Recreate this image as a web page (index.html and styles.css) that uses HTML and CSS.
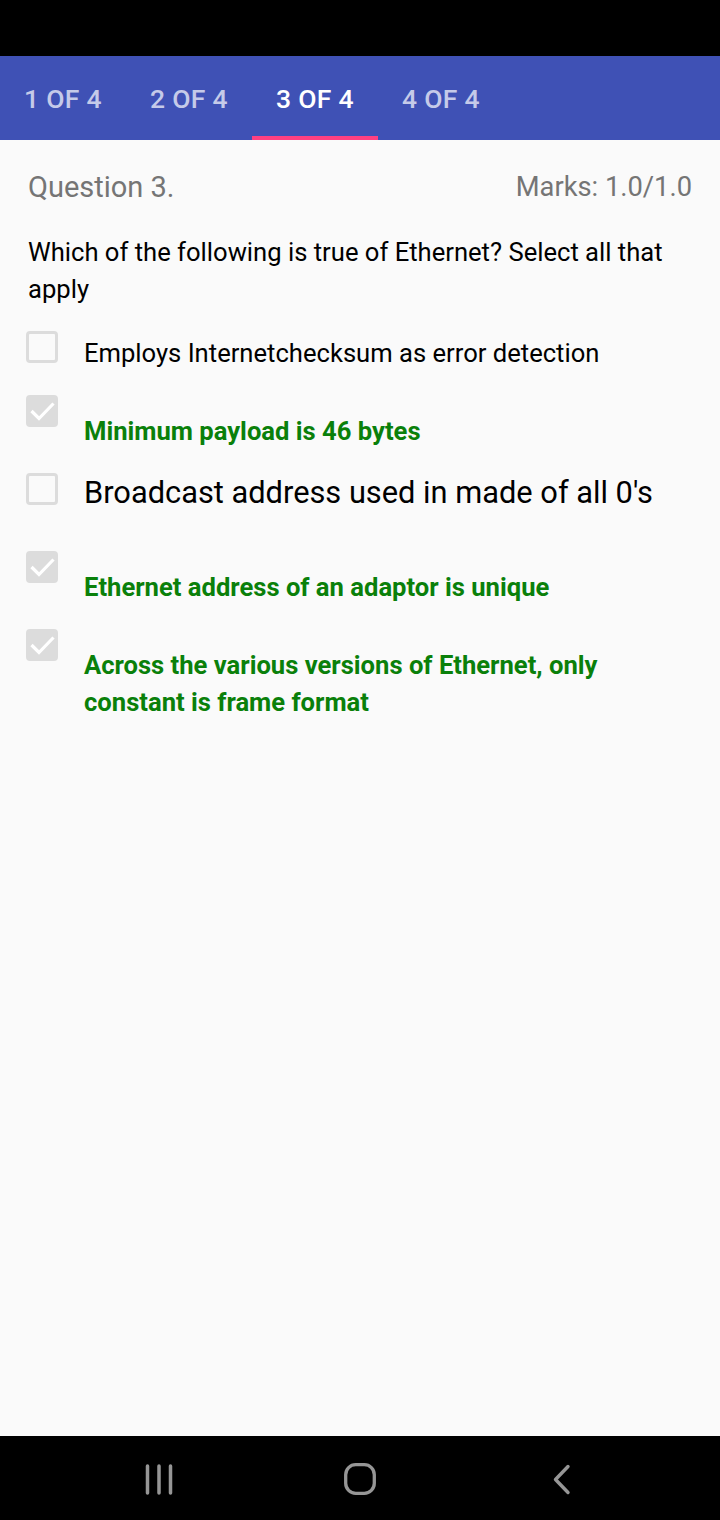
FILE: index.html
```html
<!DOCTYPE html>
<html>
<head>
<meta charset="utf-8">
<link rel="stylesheet" href="styles.css">
</head>
<body>
<div class="screen">
  <div class="statusbar"></div>
  <nav class="tabs">
    <div class="tab">1 OF 4</div>
    <div class="tab">2 OF 4</div>
    <div class="tab active">3 OF 4</div>
    <div class="tab">4 OF 4</div>
  </nav>
  <main class="content">
    <div class="qhead">
      <span class="qnum">Question 3.</span>
      <span class="marks">Marks: 1.0/1.0</span>
    </div>
    <p class="qtext">Which of the following is true of Ethernet? Select all that apply</p>
    <div class="options">
      <div class="opt">
        <span class="box"></span>
        <span class="label">Employs Internetchecksum as error detection</span>
      </div>
      <div class="opt checked">
        <span class="box"><svg viewBox="0 0 32 32" width="32" height="32"><path d="M5.5 16 L13 23.5 L27.5 8.5" fill="none" stroke="#fff" stroke-width="3.2"/></svg></span>
        <span class="label">Minimum payload is 46 bytes</span>
      </div>
      <div class="opt big">
        <span class="box"></span>
        <span class="label">Broadcast address used in made of all 0's</span>
      </div>
      <div class="opt checked">
        <span class="box"><svg viewBox="0 0 32 32" width="32" height="32"><path d="M5.5 16 L13 23.5 L27.5 8.5" fill="none" stroke="#fff" stroke-width="3.2"/></svg></span>
        <span class="label">Ethernet address of an adaptor is unique</span>
      </div>
      <div class="opt checked">
        <span class="box"><svg viewBox="0 0 32 32" width="32" height="32"><path d="M5.5 16 L13 23.5 L27.5 8.5" fill="none" stroke="#fff" stroke-width="3.2"/></svg></span>
        <span class="label">Across the various versions of Ethernet, only constant is frame format</span>
      </div>
    </div>
  </main>
  <footer class="navbar">
    <div class="nav-cell"><svg width="30" height="31" viewBox="0 0 30 31"><path d="M3.5 2 V29 M15 2 V29 M26.5 2 V29" stroke="#969696" stroke-width="3.5" stroke-linecap="round" fill="none"/></svg></div>
    <div class="nav-cell"><svg width="32" height="32" viewBox="0 0 32 32"><rect x="1.7" y="1.7" width="28.6" height="28.6" rx="10" stroke="#969696" stroke-width="3.3" fill="none"/></svg></div>
    <div class="nav-cell"><svg width="20" height="31" viewBox="0 0 20 31"><path d="M17 2.5 L4.5 15.5 L17 28.5" stroke="#969696" stroke-width="3.4" stroke-linecap="round" stroke-linejoin="round" fill="none"/></svg></div>
  </footer>
</div>
</body>
</html>
```
FILE: styles.css
```css
* { box-sizing: border-box; }
html, body { margin: 0; padding: 0; }
body { font-family: Roboto, "Noto Sans", sans-serif; background: #fafafa; }
.screen { width: 720px; height: 1520px; display: flex; flex-direction: column; background: #fafafa; }
.statusbar { height: 56px; background: #000; flex: none; }
.tabs { height: 84px; background: #3f51b5; display: flex; flex: none; }
.tab {
  width: 126px; display: flex; align-items: center; justify-content: center;
  color: #c5cae9; font-size: 26.5px; font-weight: 500; letter-spacing: 0.3px;
  border-bottom: 4px solid transparent; padding-top: 4px;
}
.tab.active { color: #fff; border-bottom-color: #ff4081; }
.content { flex: 1; padding: 27px 28px 0 28px; }
.qhead { display: flex; justify-content: space-between; align-items: center; height: 40px; color: #757575; }
.qnum { font-size: 29px; }
.marks { font-size: 27.3px; }
.qtext { margin: 26.5px 0 0 0; font-size: 25.6px; line-height: 37px; color: #000; }
.options { margin-top: 23.5px; display: flex; flex-direction: column; gap: 23.5px; margin-left: -2px; }
.opt { display: flex; align-items: flex-start; }
.box {
  width: 32px; height: 32px; border: 3.5px solid #dcdcdc; border-radius: 4px; flex: none;
  margin-right: 26px; background: #fafafa; display: block; position: relative;
}
.box svg { position: absolute; left: -3.5px; top: -3.5px; }
.label { font-size: 25.6px; line-height: 37px; padding-top: 3.5px; color: #000; }
.opt.checked .box { background: #dcdcdc; }
.opt.checked .label { color: #0a800a; font-weight: 700; padding-top: 17.5px; }
.opt.big .label { font-size: 30.8px; line-height: 40px; padding-top: 0; }
.opt.big { margin-bottom: 14.5px; }
.navbar { height: 84px; background: #000; flex: none; display: flex; align-items: center; justify-content: center; }
.nav-cell { width: 201px; display: flex; justify-content: center; align-items: center; padding-top: 2px; }
```
